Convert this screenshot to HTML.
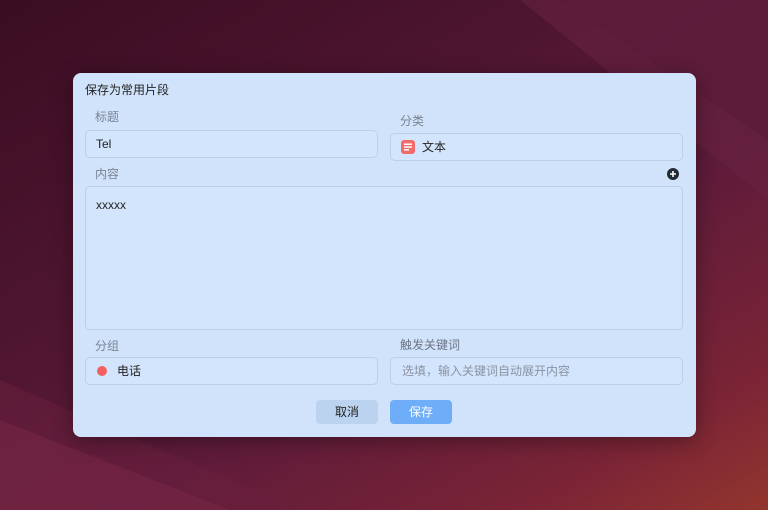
<!DOCTYPE html>
<html><head><meta charset="utf-8"><style>
*{margin:0;padding:0;box-sizing:border-box}
body{width:768px;height:510px;overflow:hidden;position:relative;font-family:"Liberation Sans","Noto Sans CJK SC",sans-serif;
background:linear-gradient(150deg,#3a0d22 0%,#4e1530 35%,#5e1b3a 60%,#7a2436 85%,#93352e 100%)}
.bg{position:absolute;inset:0}
.dlg{position:absolute;left:73px;top:73px;width:623px;height:364px;background:#d1e3fb;border-radius:8px;box-shadow:0 4px 20px rgba(0,0,0,.35)}
.t{position:absolute;font-size:12px;color:#222;line-height:16px}
.l{position:absolute;font-size:12px;color:#7a8494;line-height:16px}
.in{position:absolute;border:1px solid #bccfe8;border-radius:5px;background:#d3e5fc;font-size:12px;color:#222;line-height:26px}
.btn{position:absolute;top:327px;width:62px;height:24px;border-radius:4px;font-size:12px;text-align:center;line-height:24px}
</style></head><body>
<svg class="bg" width="768" height="510"><polygon points="520,0 768,0 768,200" fill="#6a2444" opacity=".5"/><polygon points="560,0 768,0 768,140" fill="#5a1a38" opacity=".6"/><polygon points="0,380 300,510 0,510" fill="#6a1f3e" opacity=".5"/><polygon points="0,420 230,510 0,510" fill="#7a2746" opacity=".5"/></svg>
<div class="dlg">
<div class="t" style="left:12px;top:9px">保存为常用片段</div>
<div class="l" style="left:22px;top:36px">标题</div>
<div class="in" style="left:12px;top:57px;width:293px;height:28px;padding:0 10px">Tel</div>
<div class="l" style="left:327px;top:40px">分类</div>
<div class="in" style="left:317px;top:60px;width:293px;height:28px;padding:0 0 0 31px">文本
<svg style="position:absolute;left:10px;top:6px" width="14" height="14"><rect width="14" height="14" rx="3" fill="#f26b6b"/><rect x="3" y="3.5" width="8" height="1.5" fill="#fff"/><rect x="3" y="6.3" width="8" height="1.5" fill="#fff"/><rect x="3" y="9.1" width="5" height="1.5" fill="#fff"/></svg></div>
<div class="l" style="left:22px;top:93px">内容</div>
<svg style="position:absolute;left:594px;top:95px" width="12" height="12"><circle cx="6" cy="6" r="6" fill="#222a33"/><path d="M6 3v6M3 6h6" stroke="#fff" stroke-width="1.6"/></svg>
<div class="in" style="left:12px;top:113px;width:598px;height:144px;padding:5px 10px">xxxxx</div>
<div class="l" style="left:22px;top:265px">分组</div>
<div class="in" style="left:12px;top:284px;width:293px;height:28px;padding:0 0 0 31px">电话<span style="position:absolute;left:11px;top:8px;width:10px;height:10px;border-radius:50%;background:#f26060"></span></div>
<div class="l" style="left:327px;top:264px;color:#6d7585">触发关键词</div>
<div class="in" style="left:317px;top:284px;width:293px;height:28px;padding:0 11px;color:#8a93a3">选填，输入关键词自动展开内容</div>
<div class="btn" style="left:243px;background:#bcd3f0;color:#222">取消</div>
<div class="btn" style="left:317px;background:#6eaef9;color:#fff">保存</div>
</div>
</body></html>
